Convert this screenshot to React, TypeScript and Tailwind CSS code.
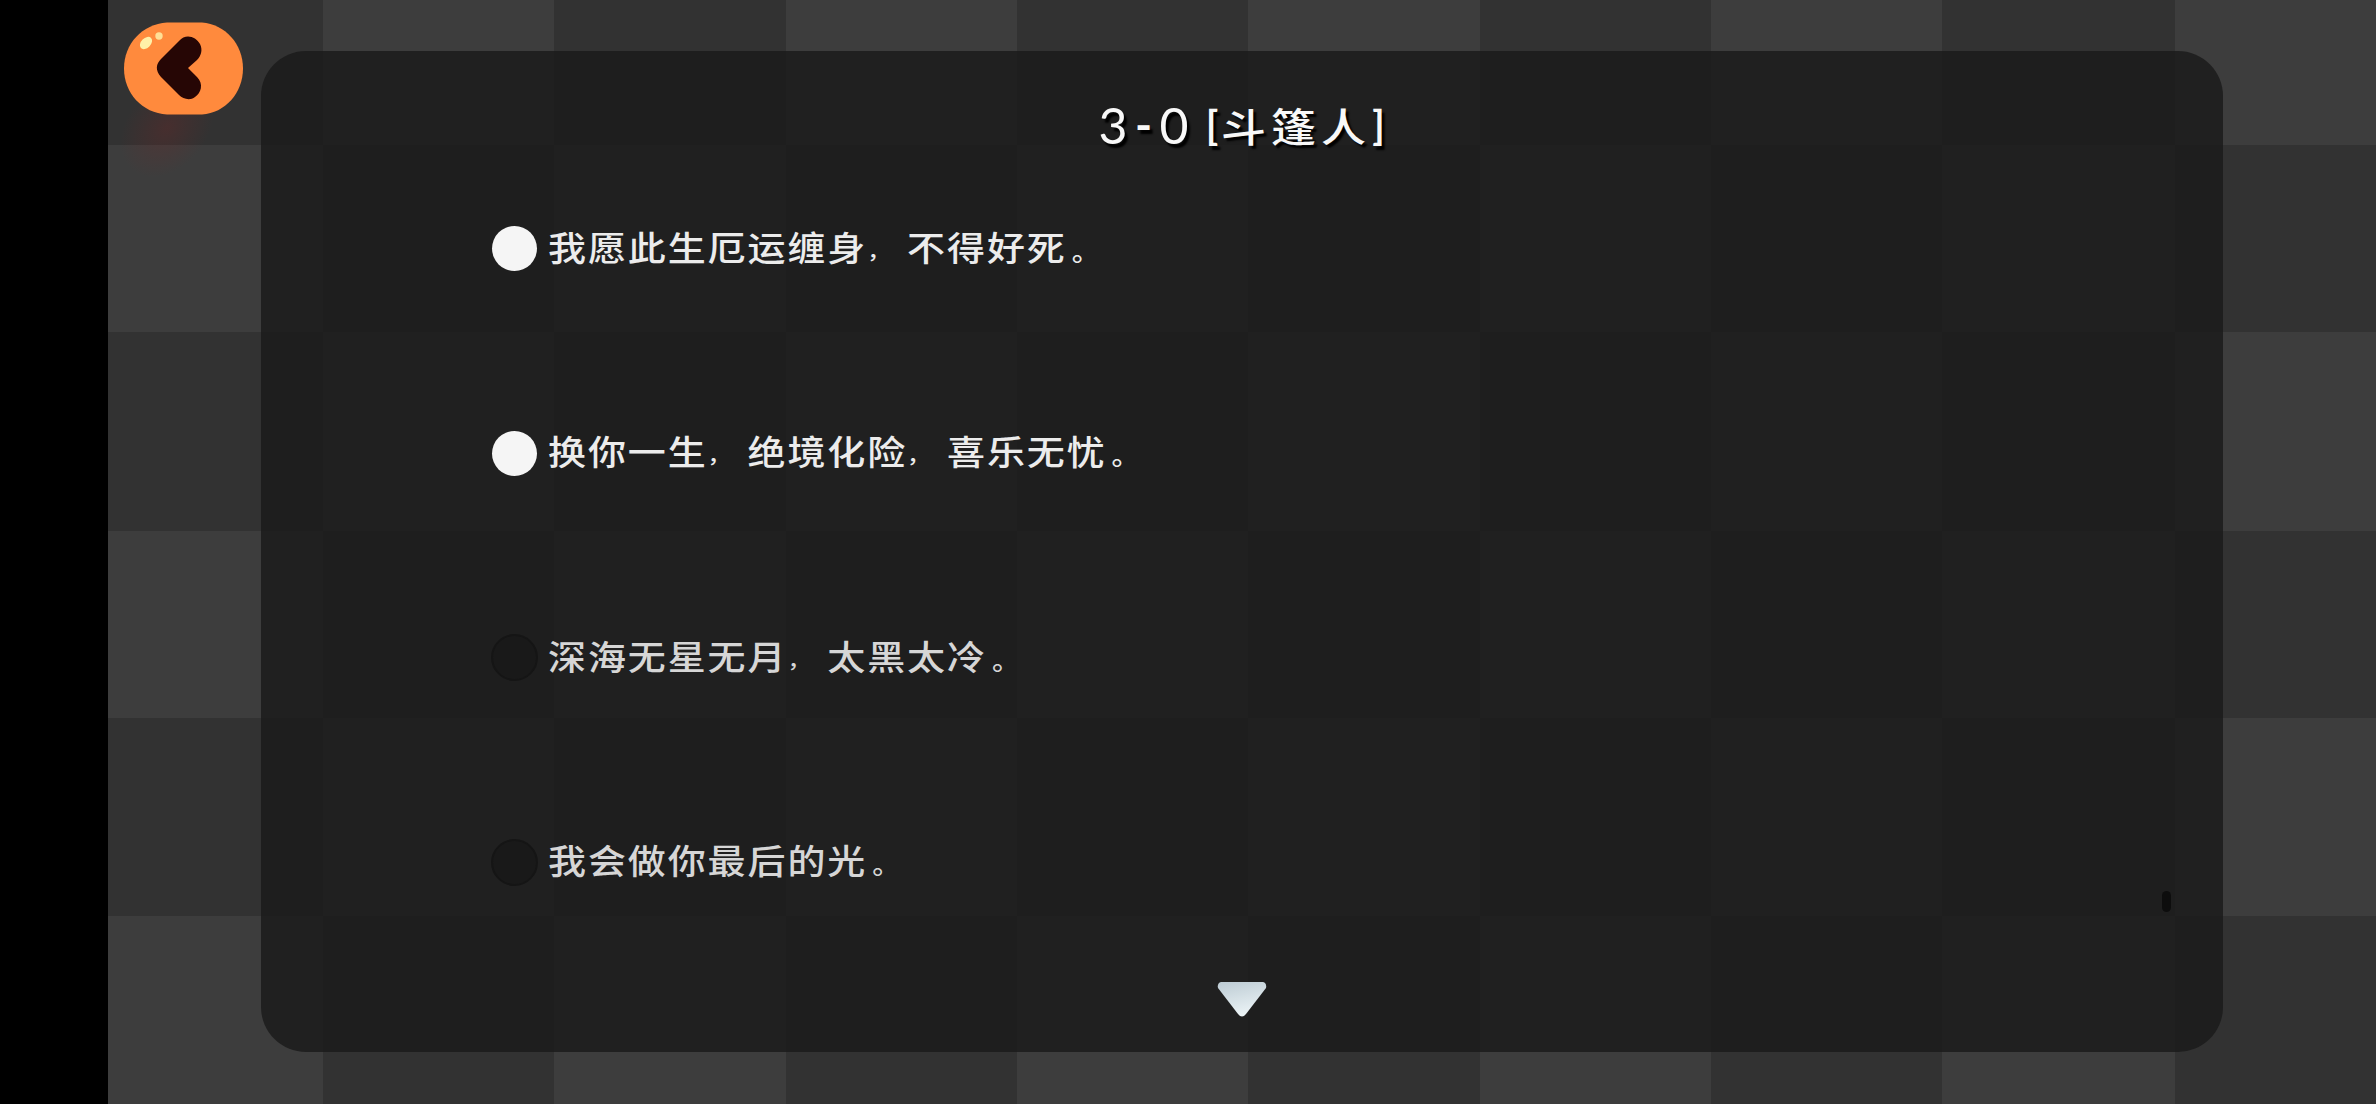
import React from 'react';

const ROWS = 6;
const COLS = 10;

const lines = [
  { text: '我愿此生厄运缠身，不得好死。', active: true },
  { text: '换你一生，绝境化险，喜乐无忧。', active: true },
  { text: '深海无星无月，太黑太冷。', active: false },
  { text: '我会做你最后的光。', active: false },
];

const Checkerboard: React.FC = () => (
  <div className="absolute inset-0 grid grid-cols-[215px_231px_232px_231px_231px_232px_231px_231px_233px_201px] grid-rows-[145px_187px_199px_187px_198px_188px] border-b-2 border-[#2e2e2e]">
    {Array.from({ length: ROWS * COLS }, (_, i) => {
      const dark = (Math.floor(i / COLS) + (i % COLS)) % 2 === 0;
      return <div key={i} className={dark ? 'bg-[#323232]' : 'bg-[#3d3d3d]'} />;
    })}
  </div>
);

const BackButton: React.FC = () => (
  <button className="relative block w-[119px] h-[93px]" aria-label="返回">
    {/* reddish glow under the button */}
    <span className="absolute left-[-12px] top-[66px] w-[110px] h-[80px] rotate-[-50deg] bg-[radial-gradient(closest-side,rgba(130,35,35,0.26),transparent)]" />
    <svg className="relative" width="119" height="93" viewBox="0 0 119 93">
      <path
        d="M43 0.5H78C101 2 119 22 119 46.5S101 91 78 92.5H43C18 91 0 71 0 46.5S18 2 43 0.5Z"
        fill="#ff8a3d"
      />
      <ellipse cx="22" cy="21" rx="7.2" ry="4.8" transform="rotate(-45 22 21)" fill="#fff0a8" />
      <circle cx="35" cy="14" r="3.7" fill="#ffdf96" />
      <path
        d="M55 19C62 11 72 15 76 22C79 28 77 34 73 38L64 46L73 55C80 62 77 71 71 75C66 79 59 77 55 73L37 55C31 48 32 42 37 37Z"
        fill="#260605"
      />
    </svg>
  </button>
);

const Title: React.FC = () => (
  <h1 className="flex h-[60px] items-center whitespace-pre font-['Lato','Noto_Sans_CJK_SC',sans-serif] text-[50px] leading-[60px] text-[#f8f8f8] [text-shadow:3px_4px_2px_#000]">
    <span className="w-[30px] text-center">3</span>
    <span className="w-[31px] text-center font-bold text-[46px]">-</span>
    <span className="w-[30px] text-center">0</span>
    <span className="ml-[14px] w-[18px] text-center text-[40px] font-bold">[</span>
    <span className="font-['Noto_Sans_CJK_SC',sans-serif] font-medium text-[45px] tracking-[5px] scale-y-[0.88]">斗篷人</span>
    <span className="w-[15px] text-center text-[40px] font-bold">]</span>
  </h1>
);

const DialogueLine: React.FC<{ text: string; active: boolean }> = ({ text, active }) => (
  <li className="flex h-[47px] items-center">
    <span className="flex w-[47px] justify-center">
      {active ? (
        <span className="size-[45px] rounded-full bg-[#f5f5f5]" />
      ) : (
        <span className="size-[47px] rounded-full border-2 border-[#151515] bg-[#191919]" />
      )}
    </span>
    <span
      className={`mb-[5px] ml-[10px] whitespace-nowrap font-['Noto_Sans_CJK_SC',sans-serif] font-medium text-[38px] leading-[47px] tracking-[1.9px] scale-y-[0.9] ${
        active ? 'text-[#ececec]' : 'text-[#d6d6d6]'
      }`}
    >
      {/* punctuation is drawn smaller than the glyphs but keeps a full cell */}
      {text.split(/([，。])/).map((part, i) => {
        if (part === '，') {
          return (
            <span key={i} className="relative top-[-3px] inline-block w-[39.9px] text-[23px] leading-none">
              {part}
            </span>
          );
        }
        if (part === '。') {
          return (
            <span key={i} className="inline-block w-[39.9px] pl-[5px] text-[28px] leading-none">
              {part}
            </span>
          );
        }
        return part;
      })}
    </span>
  </li>
);

export default function App() {
  return (
    <div className="flex h-[1104px] w-[2376px] overflow-hidden bg-black">
      <div className="w-[108px] shrink-0 bg-black" />
      <main className="relative flex flex-1">
        <Checkerboard />

        <div className="relative w-[153px] shrink-0 pl-[16px] pt-[22px]">
          <BackButton />
        </div>

        <section className="relative mt-[51px] flex h-[1001px] w-[1962px] flex-col rounded-[45px] bg-[#191919]/80">
          <div className="flex justify-center pt-[44px]">
            <Title />
          </div>

          <div className="mt-[70px] flex justify-between pl-[230px] pr-[52px]">
            <ul className="flex flex-col gap-[157.5px]">
              {lines.map((line) => (
                <DialogueLine key={line.text} text={line.text} active={line.active} />
              ))}
            </ul>
            {/* scroll thumb, near the end of the list */}
            <div className="mb-[-26px] h-[21px] w-[9px] self-end rounded-full bg-[#0d0d0d]" />
          </div>

          <div className="mt-[95px] flex justify-center">
            <svg width="50" height="37" viewBox="0 0 50 37">
              <defs>
                <linearGradient id="arrow" x1="0" y1="0" x2="0.3" y2="1">
                  <stop offset="0" stopColor="#bccbd3" />
                  <stop offset="1" stopColor="#eaf2f5" />
                </linearGradient>
              </defs>
              <path
                d="M4 1H46Q50 2 49 7L29 33Q25 38 21 33L1 7Q0 2 4 1Z"
                fill="url(#arrow)"
              />
            </svg>
          </div>
        </section>
      </main>
    </div>
  );
}
